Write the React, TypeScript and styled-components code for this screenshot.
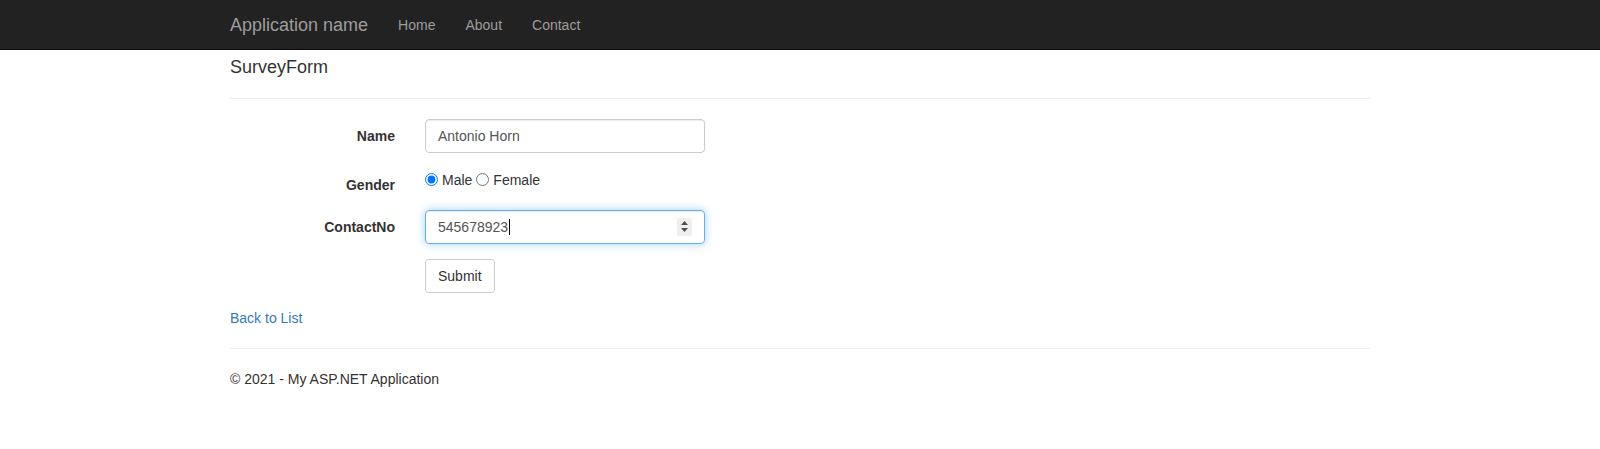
import React from "react";
import styled, { createGlobalStyle } from "styled-components";

const GlobalStyle = createGlobalStyle`
  html, body { margin: 0; padding: 0; background: #fff; }
  body {
    font-family: "Liberation Sans", Arial, Helvetica, sans-serif;
    font-size: 14px;
    line-height: 20px;
    color: #333;
  }
  * { box-sizing: border-box; }
`;

const Navbar = styled.nav`
  background: #222;
  border-bottom: 1px solid #080808;
  height: 50px;
`;

const Container = styled.div`
  width: 1170px;
  padding: 0 15px;
  margin: 0 auto;
`;

const NavInner = styled(Container)`
  display: flex;
  align-items: center;
  height: 49px;
`;

const Brand = styled.a`
  color: #9d9d9d;
  font-size: 18px;
  line-height: 20px;
  text-decoration: none;
  padding-right: 15px;
`;

const NavLinks = styled.ul`
  display: flex;
  list-style: none;
  margin: 0;
  padding: 0;
`;

const NavLink = styled.a`
  display: block;
  color: #9d9d9d;
  text-decoration: none;
  padding: 0 15px;
  line-height: 20px;
`;

const Title = styled.h4`
  font-size: 18px;
  font-weight: 500;
  line-height: 19.8px;
  margin: 8px 0 10px;
`;

const Rule = styled.hr`
  border: 0;
  border-top: 1px solid #eee;
  margin: 20px 0;
`;

const FormGrid = styled.form`
  display: grid;
  grid-template-columns: 165px 1fr;
  column-gap: 30px;
  row-gap: 15px;
  margin-bottom: 15px;
`;

const Label = styled.label`
  text-align: right;
  font-weight: 700;
  padding-top: 7px;
  line-height: 20px;
`;

const Field = styled.div`
  display: flex;
  align-items: flex-start;
`;

const TextInput = styled.input`
  width: 280px;
  height: 34px;
  padding: 6px 12px;
  font: inherit;
  color: #555;
  border: 1px solid #ccc;
  border-radius: 4px;
  box-shadow: inset 0 1px 1px rgba(0, 0, 0, 0.075);
  outline: none;
`;

const FocusBox = styled.div`
  width: 280px;
  height: 34px;
  padding: 6px 12px;
  color: #555;
  border: 1px solid #66afe9;
  border-radius: 4px;
  box-shadow: inset 0 1px 1px rgba(0, 0, 0, 0.075), 0 0 8px rgba(102, 175, 233, 0.6);
  display: flex;
  align-items: center;
`;

const Caret = styled.span`
  display: inline-block;
  width: 1px;
  height: 16px;
  background: #000;
  margin-left: 0.5px;
`;

const Spacer = styled.span`
  flex: 1;
`;

const Spinner = styled.span`
  display: flex;
  align-items: center;
  justify-content: center;
  width: 15px;
  height: 18px;
  background: #efefef;
  border-radius: 2px;
`;

const RadioGroup = styled.div`
  display: flex;
  align-items: center;
  height: 20px;
  margin-top: 2px;
`;

const Radio = styled.input`
  width: 13px;
  height: 13px;
  margin: 0 4px 0 0;
`;

const RadioText = styled.span`
  margin-right: 4px;
`;

const Button = styled.button`
  font: inherit;
  color: #333;
  background: #fff;
  border: 1px solid #ccc;
  border-radius: 4px;
  padding: 6px 12px;
  line-height: 20px;
  cursor: pointer;
`;

const BackLink = styled.a`
  color: #337ab7;
  text-decoration: none;
`;

const FooterText = styled.p`
  margin: 0 0 10px;
`;

export default function App() {
  return (
    <>
      <GlobalStyle />
      <Navbar>
        <NavInner>
          <Brand href="#">Application name</Brand>
          <NavLinks>
            <li><NavLink href="#">Home</NavLink></li>
            <li><NavLink href="#">About</NavLink></li>
            <li><NavLink href="#">Contact</NavLink></li>
          </NavLinks>
        </NavInner>
      </Navbar>
      <Container>
        <Title>SurveyForm</Title>
        <Rule />
        <FormGrid onSubmit={(e) => e.preventDefault()}>
          <Label htmlFor="name">Name</Label>
          <Field>
            <TextInput id="name" type="text" defaultValue="Antonio Horn" />
          </Field>
          <Label>Gender</Label>
          <Field>
            <RadioGroup>
              <Radio type="radio" name="gender" defaultChecked />
              <RadioText>Male</RadioText>
              <Radio type="radio" name="gender" />
              <RadioText>Female</RadioText>
            </RadioGroup>
          </Field>
          <Label>ContactNo</Label>
          <Field>
            <FocusBox>
              <span>545678923</span>
              <Caret />
              <Spacer />
              <Spinner>
                <svg width="9" height="13" viewBox="0 0 9 13">
                  <path d="M4.5 1 L8 5 L1 5 Z" fill="#505050" />
                  <path d="M4.5 12 L8 8 L1 8 Z" fill="#505050" />
                </svg>
              </Spinner>
            </FocusBox>
          </Field>
          <span />
          <Field>
            <Button type="submit">Submit</Button>
          </Field>
        </FormGrid>
        <div>
          <BackLink href="#">Back to List</BackLink>
        </div>
        <Rule />
        <footer>
          <FooterText>© 2021 - My ASP.NET Application</FooterText>
        </footer>
      </Container>
    </>
  );
}
